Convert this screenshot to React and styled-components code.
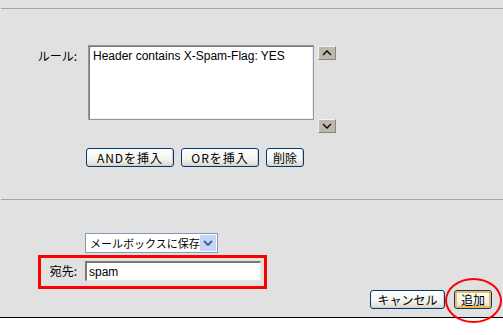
import React from 'react';
import styled, { createGlobalStyle } from 'styled-components';

const Global = createGlobalStyle`
  html, body { margin: 0; padding: 0; background: #fff; }
  body { font-family: "Noto Sans CJK JP", "DejaVu Sans", sans-serif; font-size: 12px; color: #000; }
`;

const Screen = styled.div`
  width: 503px;
  height: 335px;
  background: #fff;
  overflow: hidden;
`;

const Page = styled.div`
  width: 503px;
  height: 318px;
  background: #e1e1e1;
  border-bottom: 1px solid #000;
  padding-top: 8px;
  box-sizing: border-box;
  position: relative;
`;

const Rule = styled.div`
  height: 1px;
  margin-left: 1px;
  background: #a9a894;
  margin-top: ${({ top = 0 }) => top}px;
`;

const RuleRow = styled.div`
  display: flex;
  align-items: flex-start;
  margin-top: 36px;
`;

const Label = styled.div`
  width: ${({ w = 88 }) => w}px;
  box-sizing: border-box;
  padding-right: ${({ pr = 11 }) => pr}px;
  text-align: right;
  font-size: 12px;
  line-height: 14px;
  padding-top: ${({ pt = 0 }) => pt}px;
  flex-shrink: 0;
`;

const RuleBox = styled.textarea`
  width: 226px;
  height: 75px;
  box-sizing: border-box;
  margin: 0;
  resize: none;
  border: 1px solid #7f9db9;
  box-shadow: inset 1px 1px 0 #7b7a6b, inset 2px 2px 0 #fff, inset -1px -1px 0 #f1efe2;
  background: #fff;
  padding: 3px 4px;
  font-family: "Liberation Sans", "DejaVu Sans", sans-serif;
  font-size: 12px;
  line-height: 14px;
  color: #000;
  outline: none;
`;

const ArrowCol = styled.div`
  display: flex;
  flex-direction: column;
  justify-content: space-between;
  height: 87px;
  margin-left: 4px;
  margin-top: 1px;
`;

const ArrowBtn = styled.div`
  width: 18px;
  height: 14px;
  box-sizing: border-box;
  background: #bdb8ac;
  border-top: 1px solid #f4f3ee;
  border-left: 1px solid #f4f3ee;
  border-right: 1px solid #8a877d;
  border-bottom: 1px solid #8a877d;
  display: flex;
  align-items: center;
  justify-content: center;
`;

const ButtonRow = styled.div`
  display: flex;
  gap: ${({ gap = 7 }) => gap}px;
  margin-left: ${({ left = 0 }) => left}px;
  margin-top: ${({ top = 0 }) => top}px;
  justify-content: ${({ end }) => (end ? 'flex-end' : 'flex-start')};
  padding-right: ${({ end }) => (end ? 11 : 0)}px;
  position: relative;
`;

const Btn = styled.button`
  width: ${({ w }) => w}px;
  height: 19px;
  box-sizing: border-box;
  margin: 0;
  padding: 0;
  border: 1px solid #003c74;
  border-radius: 3px;
  background: linear-gradient(#fefefe, #f4f4f0 60%, #d9d6cb);
  box-shadow: ${({ primary }) =>
    primary ? 'inset 0 0 0 2px #f9b94a' : 'inset -1px -1px 0 #d6d0c5'};
  font-family: "Noto Sans CJK JP", sans-serif;
  font-size: 12px;
  line-height: 15px;
  color: #000;
  white-space: nowrap;
  letter-spacing: ${({ ls = 0 }) => ls}px;
`;

const SelectBox = styled.div`
  margin-left: 85px;
  margin-top: 33px;
  width: 133px;
  height: 20px;
  box-sizing: border-box;
  border: 1px solid #7f9db9;
  background: #fff;
  display: flex;
  align-items: center;
  justify-content: space-between;
  padding: 1px 1px 1px 4px;
  font-size: 11px;
  white-space: nowrap;
  overflow: hidden;
`;

const DropBtn = styled.div`
  width: 16px;
  height: 16px;
  flex-shrink: 0;
  background: #c4d5fb;
  border-radius: 1px;
  display: flex;
  align-items: center;
  justify-content: center;
`;

const RedBox = styled.div`
  display: flex;
  align-items: flex-start;
  margin-left: 38px;
  margin-top: 2px;
  width: 229px;
  height: 34px;
  box-sizing: border-box;
  border: 3px solid #f00;
  padding-top: 3px;
`;

const TextInput = styled.input`
  width: 176px;
  height: 20px;
  box-sizing: border-box;
  margin: 0;
  border-top: 2px solid #7b7a6b;
  border-left: 2px solid #7b7a6b;
  border-right: 1px solid #ece9d8;
  border-bottom: 1px solid #ece9d8;
  background: #fff;
  padding: 0 2px;
  font-family: "Liberation Sans", "DejaVu Sans", sans-serif;
  font-size: 12px;
  outline: none;
`;

const Circle = styled.div`
  position: absolute;
  left: 445px;
  top: -12px;
  width: 57px;
  height: 45px;
  box-sizing: border-box;
  border: 2px solid #f00;
  border-radius: 50%;
  pointer-events: none;
  z-index: 2;
`;

const Chevron = ({ up, color = '#000', w = 1.3 }) => (
  <svg width="10" height="6" viewBox="0 0 10 6">
    <polyline
      points={up ? '1,5 5,1 9,5' : '1,1 5,5 9,1'}
      fill="none"
      stroke={color}
      strokeWidth={w}
    />
  </svg>
);

export default function App() {
  return (
    <Screen>
      <Global />
      <Page>
        <Rule />
        <RuleRow>
          <Label pt={4}>ルール:</Label>
          <RuleBox readOnly defaultValue="Header contains X-Spam-Flag: YES" />
          <ArrowCol>
            <ArrowBtn><Chevron up /></ArrowBtn>
            <ArrowBtn><Chevron /></ArrowBtn>
          </ArrowCol>
        </RuleRow>
        <ButtonRow left={86} top={15}>
          <Btn w={88} ls={1}>ANDを挿入</Btn>
          <Btn w={78} ls={1}>ORを挿入</Btn>
          <Btn w={38}>削除</Btn>
        </ButtonRow>
        <Rule top={32} />
        <SelectBox>
          <span>メールボックスに保存</span>
          <DropBtn><Chevron color="#4d6185" w={2} /></DropBtn>
        </SelectBox>
        <RedBox>
          <Label w={44} pr={8} pt={3}>宛先:</Label>
          <TextInput readOnly defaultValue="spam" />
        </RedBox>
        <ButtonRow end top={1} gap={9}>
          <Btn w={75}>キャンセル</Btn>
          <Btn w={38} primary>追加</Btn>
          <Circle />
        </ButtonRow>
      </Page>
    </Screen>
  );
}
